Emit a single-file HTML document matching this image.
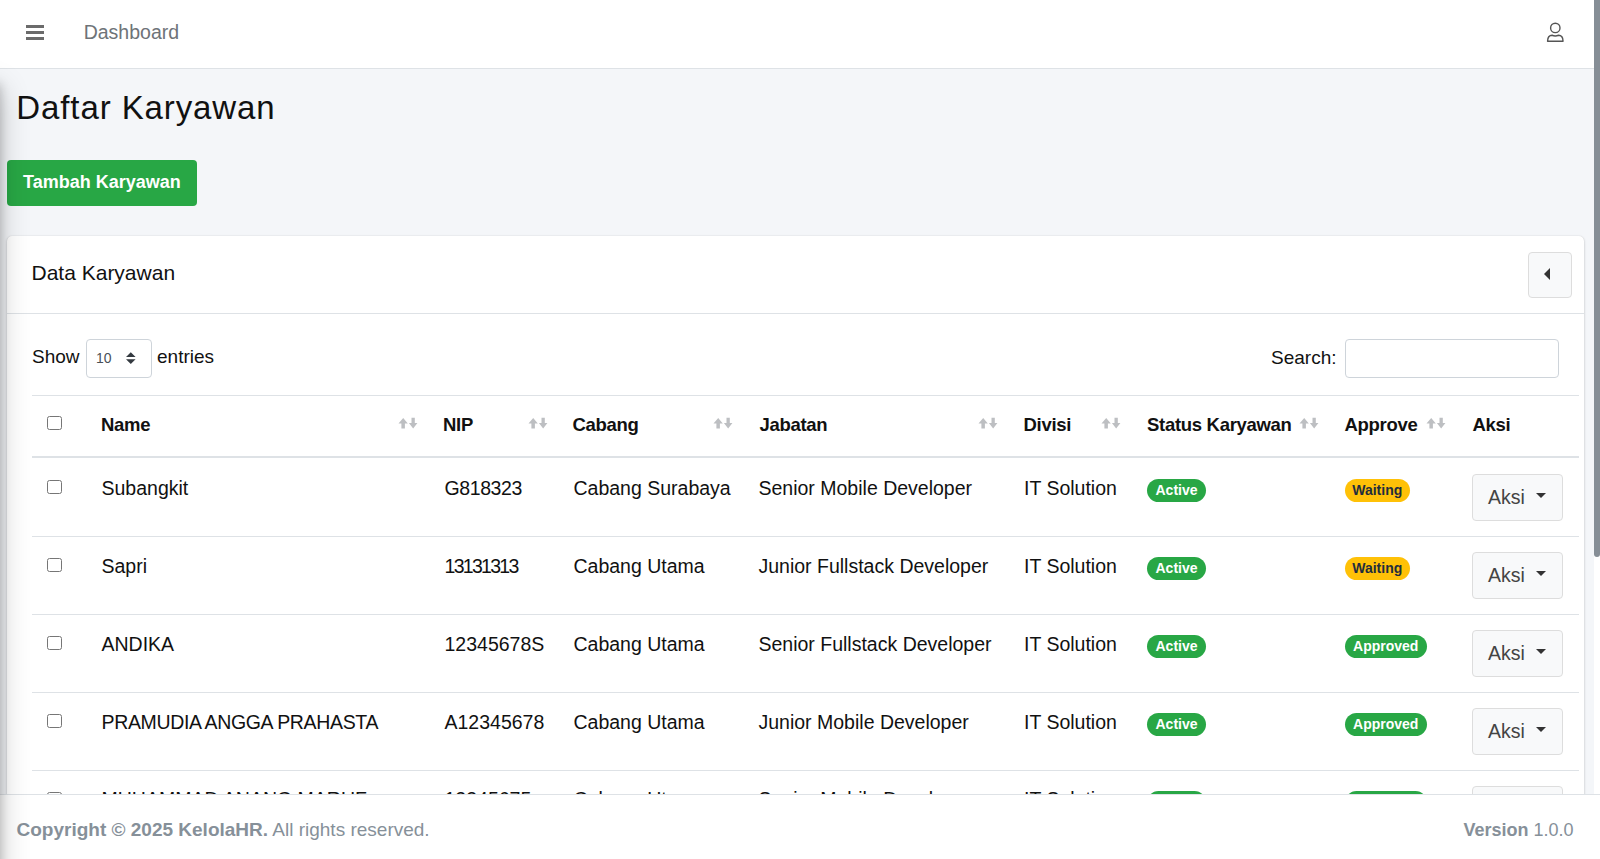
<!DOCTYPE html>
<html><head><meta charset="utf-8">
<style>
*{box-sizing:border-box;margin:0;padding:0}
html,body{width:1600px;height:859px;overflow:hidden;background:#f4f6f9;font-family:"Liberation Sans",sans-serif;color:#111}
.a{position:absolute}
.t{position:absolute;white-space:nowrap;line-height:1}
#hdr{position:absolute;left:0;top:0;width:1594px;height:69px;background:#fff;border-bottom:1px solid #dee2e6}
.bar{position:absolute;left:26px;width:18px;height:3px;background:#6b6b6b}
#shadow{position:absolute;left:-250px;top:74px;width:250px;height:900px;background:#343a40;box-shadow:0 14px 28px rgba(0,0,0,.23),0 10px 10px rgba(0,0,0,.2)}
.btn-g{position:absolute;left:7px;top:160px;width:190px;height:46px;background:#28a745;border-radius:4px}
#card{position:absolute;left:7px;top:236px;width:1577px;height:700px;background:#fff;border-radius:5px;box-shadow:0 0 1px rgba(0,0,0,.125),0 1px 3px rgba(0,0,0,.2)}
.hl{position:absolute;height:1px;background:#dee2e6}
.cb{position:absolute;width:15px;height:14px;border:1px solid #767676;border-radius:2.5px;background:#fff}
.badge{position:absolute;height:23px;border-radius:12px;font-weight:bold;font-size:14px;line-height:23px;text-align:center;color:#fff;background:#28a745}
.bw{background:#ffc107;color:#1f2d3d}
.aksi{position:absolute;width:91px;height:47px;background:#f8f9fa;border:1px solid #ddd;border-radius:4px}
.caret{position:absolute;width:0;height:0;border-left:5.7px solid transparent;border-right:5.7px solid transparent;border-top:5.7px solid #333}
#footer{position:absolute;left:0;top:794px;width:1600px;height:65px;background:#fff;border-top:1px solid #dee2e6;color:#869099}
#sb{position:absolute;left:1594px;top:0;width:6px;height:794px;background:#fff}
#thumb{position:absolute;left:1594px;top:0;width:6px;height:557px;background:#868e96;border-radius:0 0 3px 3px}
</style></head><body>

<!-- header -->
<div id="hdr">
  <div class="bar" style="top:25px"></div>
  <div class="bar" style="top:31px"></div>
  <div class="bar" style="top:37px"></div>
  <div class="t" style="left:83.7px;top:22.6px;font-size:19.5px;color:#6e7378">Dashboard</div>
  <svg class="a" style="left:1540px;top:16px" width="30" height="32" viewBox="1540 16 30 32">
    <circle cx="1555.3" cy="27.9" r="4.7" fill="none" stroke="#555" stroke-width="1.4"/>
    <path d="M1547.6 41.3 C1547.4 37.5 1549.5 35.2 1552 35.2 C1553.6 35.9 1557 35.9 1558.6 35.2 C1561.2 35.2 1563.2 37.5 1563 41.3 Z" fill="none" stroke="#555" stroke-width="1.5" stroke-linejoin="round"/>
  </svg>
</div>

<!-- title -->
<div class="t" style="left:16.3px;top:91.2px;font-size:33px;letter-spacing:0.9px;color:#111">Daftar Karyawan</div>

<div class="btn-g"></div>
<div class="t" style="left:23px;top:172.7px;font-size:18px;font-weight:bold;color:#fff">Tambah Karyawan</div>

<!-- card -->
<div id="card"></div>
<div class="hl" style="left:7px;top:313px;width:1577px"></div>
<div class="t" style="left:31.5px;top:262.2px;font-size:21px;color:#111">Data Karyawan</div>
<div class="a" style="left:1528px;top:252px;width:44px;height:46px;background:#f8f9fa;border:1px solid #ddd;border-radius:4px"></div>
<div class="a" style="left:1544px;top:268.2px;width:0;height:0;border-top:6px solid transparent;border-bottom:6px solid transparent;border-right:6.2px solid #333"></div>

<div class="t" style="left:32px;top:347px;font-size:19px">Show</div>
<div class="a" style="left:86px;top:339px;width:66px;height:39px;border:1px solid #ced4da;border-radius:4px;background:#fff"></div>
<div class="t" style="left:96px;top:351.1px;font-size:14px;color:#495057">10</div>
<svg class="a" style="left:124px;top:350px" width="14" height="16" viewBox="0 0 14 16">
  <path d="M2 7 L6.8 2.3 L11.6 7 Z M2 9.3 L6.8 14 L11.6 9.3 Z" fill="#343a40"/>
</svg>
<div class="t" style="left:157px;top:347px;font-size:19px">entries</div>

<div class="t" style="left:1271px;top:348.3px;font-size:19px">Search:</div>
<div class="a" style="left:1345px;top:339px;width:214px;height:39px;border:1px solid #ced4da;border-radius:4px;background:#fff"></div>

<!-- table -->
<div class="hl" style="left:32px;top:395px;width:1547px"></div>
<div class="cb" style="left:47px;top:416px"></div>
<div class="t" style="left:101px;top:416.2px;font-size:18.5px;letter-spacing:-0.3px;font-weight:bold">Name</div>
<div class="t" style="left:443px;top:416.2px;font-size:18.5px;letter-spacing:-0.3px;font-weight:bold">NIP</div>
<div class="t" style="left:572.5px;top:416.2px;font-size:18.5px;letter-spacing:-0.3px;font-weight:bold">Cabang</div>
<div class="t" style="left:759.5px;top:416.2px;font-size:18.5px;letter-spacing:-0.3px;font-weight:bold">Jabatan</div>
<div class="t" style="left:1023.5px;top:416.2px;font-size:18.5px;letter-spacing:-0.3px;font-weight:bold">Divisi</div>
<div class="t" style="left:1147px;top:416.2px;font-size:18.5px;letter-spacing:-0.3px;font-weight:bold">Status Karyawan</div>
<div class="t" style="left:1344.5px;top:416.2px;font-size:18.5px;letter-spacing:-0.3px;font-weight:bold">Approve</div>
<div class="t" style="left:1472.5px;top:416.2px;font-size:18.5px;letter-spacing:-0.3px;font-weight:bold">Aksi</div>
<svg width="0" height="0" style="position:absolute"><defs><g id="srt"><path d="M0.5 6.6 L5.2 0.9 L9.8 6.6 L6.9 6.6 L6.9 11.6 L3.4 11.6 L3.4 6.6 Z M13.5 0.7 L16.8 0.7 L16.8 6.1 L19.4 6.1 L15.15 11.6 L10.9 6.1 L13.5 6.1 Z" fill="#bdbfc2"/></g></defs></svg>
<svg class="a" style="left:398px;top:417px" width="20" height="12"><use href="#srt"/></svg>
<svg class="a" style="left:527.5px;top:417px" width="20" height="12"><use href="#srt"/></svg>
<svg class="a" style="left:713px;top:417px" width="20" height="12"><use href="#srt"/></svg>
<svg class="a" style="left:978px;top:417px" width="20" height="12"><use href="#srt"/></svg>
<svg class="a" style="left:1101px;top:417px" width="20" height="12"><use href="#srt"/></svg>
<svg class="a" style="left:1298.5px;top:417px" width="20" height="12"><use href="#srt"/></svg>
<svg class="a" style="left:1426px;top:417px" width="20" height="12"><use href="#srt"/></svg>
<div class="a" style="left:32px;top:456px;width:1547px;height:2px;background:#dee2e6"></div>

<!-- rows -->
<div id="rows"></div>
<div class="cb" style="left:47px;top:480.4px"></div>
<div class="t" style="left:101.5px;top:479.1px;font-size:19.5px;">Subangkit</div>
<div class="t" style="left:444.5px;top:479.1px;font-size:19.5px;letter-spacing:-0.4px;">G818323</div>
<div class="t" style="left:573.5px;top:479.1px;font-size:19.5px;">Cabang Surabaya</div>
<div class="t" style="left:758.5px;top:479.1px;font-size:19.5px;">Senior Mobile Developer</div>
<div class="t" style="left:1024px;top:479.1px;font-size:19.5px;">IT Solution</div>
<div class="badge" style="left:1147px;top:479px;width:59px">Active</div>
<div class="badge bw" style="left:1344.5px;top:479px;width:65.5px">Waiting</div>
<div class="aksi" style="left:1472px;top:474px"></div>
<div class="t" style="left:1488px;top:487.5px;font-size:19.5px;color:#444">Aksi</div>
<div class="caret" style="left:1536.4px;top:493px"></div>
<div class="hl" style="left:32px;top:536px;width:1547px"></div>
<div class="cb" style="left:47px;top:558.4px"></div>
<div class="t" style="left:101.5px;top:557.1px;font-size:19.5px;">Sapri</div>
<div class="t" style="left:444.5px;top:557.1px;font-size:19.5px;letter-spacing:-1.7px;">13131313</div>
<div class="t" style="left:573.5px;top:557.1px;font-size:19.5px;">Cabang Utama</div>
<div class="t" style="left:758.5px;top:557.1px;font-size:19.5px;">Junior Fullstack Developer</div>
<div class="t" style="left:1024px;top:557.1px;font-size:19.5px;">IT Solution</div>
<div class="badge" style="left:1147px;top:557px;width:59px">Active</div>
<div class="badge bw" style="left:1344.5px;top:557px;width:65.5px">Waiting</div>
<div class="aksi" style="left:1472px;top:552px"></div>
<div class="t" style="left:1488px;top:565.5px;font-size:19.5px;color:#444">Aksi</div>
<div class="caret" style="left:1536.4px;top:571px"></div>
<div class="hl" style="left:32px;top:614px;width:1547px"></div>
<div class="cb" style="left:47px;top:636.4px"></div>
<div class="t" style="left:101.5px;top:635.1px;font-size:19.5px;">ANDIKA</div>
<div class="t" style="left:444.5px;top:635.1px;font-size:19.5px;">12345678S</div>
<div class="t" style="left:573.5px;top:635.1px;font-size:19.5px;">Cabang Utama</div>
<div class="t" style="left:758.5px;top:635.1px;font-size:19.5px;">Senior Fullstack Developer</div>
<div class="t" style="left:1024px;top:635.1px;font-size:19.5px;">IT Solution</div>
<div class="badge" style="left:1147px;top:635px;width:59px">Active</div>
<div class="badge" style="left:1344.5px;top:635px;width:82.5px">Approved</div>
<div class="aksi" style="left:1472px;top:630px"></div>
<div class="t" style="left:1488px;top:643.5px;font-size:19.5px;color:#444">Aksi</div>
<div class="caret" style="left:1536.4px;top:649px"></div>
<div class="hl" style="left:32px;top:692px;width:1547px"></div>
<div class="cb" style="left:47px;top:714.4px"></div>
<div class="t" style="left:101.5px;top:713.1px;font-size:19.5px;letter-spacing:-0.35px;">PRAMUDIA ANGGA PRAHASTA</div>
<div class="t" style="left:444.5px;top:713.1px;font-size:19.5px;">A12345678</div>
<div class="t" style="left:573.5px;top:713.1px;font-size:19.5px;">Cabang Utama</div>
<div class="t" style="left:758.5px;top:713.1px;font-size:19.5px;">Junior Mobile Developer</div>
<div class="t" style="left:1024px;top:713.1px;font-size:19.5px;">IT Solution</div>
<div class="badge" style="left:1147px;top:713px;width:59px">Active</div>
<div class="badge" style="left:1344.5px;top:713px;width:82.5px">Approved</div>
<div class="aksi" style="left:1472px;top:708px"></div>
<div class="t" style="left:1488px;top:721.5px;font-size:19.5px;color:#444">Aksi</div>
<div class="caret" style="left:1536.4px;top:727px"></div>
<div class="hl" style="left:32px;top:770px;width:1547px"></div>
<div class="cb" style="left:47px;top:792.4px"></div>
<div class="t" style="left:101.5px;top:790.4px;font-size:19.5px;">MUHAMMAD ANANG MARUF</div>
<div class="t" style="left:444.5px;top:790.4px;font-size:19.5px;">12345675</div>
<div class="t" style="left:573.5px;top:790.4px;font-size:19.5px;">Cabang Utama</div>
<div class="t" style="left:758.5px;top:790.4px;font-size:19.5px;">Senior Mobile Developer</div>
<div class="t" style="left:1024px;top:790.4px;font-size:19.5px;">IT Solution</div>
<div class="badge" style="left:1147px;top:791px;width:59px">Active</div>
<div class="badge" style="left:1344.5px;top:791px;width:82.5px">Approved</div>
<div class="aksi" style="left:1472px;top:786px"></div>
<div class="t" style="left:1488px;top:799.5px;font-size:19.5px;color:#444">Aksi</div>
<div class="caret" style="left:1536.4px;top:805px"></div>

<!-- footer -->
<div id="footer">
  <div class="t" style="left:16.5px;top:25px;font-size:19px"><b>Copyright © 2025 KelolaHR.</b> All rights reserved.</div>
  <div class="t" style="left:1463.5px;top:25.8px;font-size:18px"><b>Version</b> 1.0.0</div>
</div>
<div id="sb"></div>
<div id="thumb"></div>
<div id="shadow"></div>
</body></html>
